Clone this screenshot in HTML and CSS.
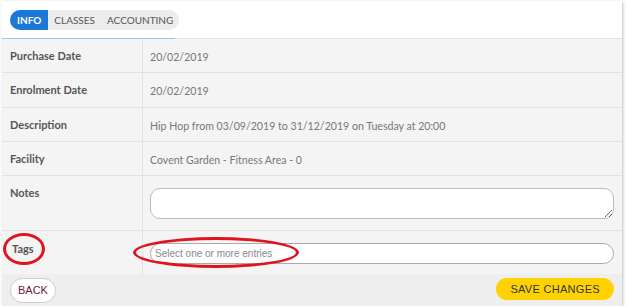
FILE: index.html
```html
<!DOCTYPE html>
<html lang="en">
<head>
  <meta charset="UTF-8" />
  <title>Enrolment</title>
  <link rel="stylesheet" href="styles.css">
</head>
<body>
  <div class="panel">
    <div class="tab-head">
      <div class="tabs">
        <span class="tab active">INFO</span>
        <span class="tab">CLASSES</span>
        <span class="tab">ACCOUNTING</span>
      </div>
    </div>

    <div class="rows">
      <div class="row"><div class="label">Purchase Date</div><div class="value">20/02/2019</div></div>
      <div class="row tall"><div class="label">Enrolment Date</div><div class="value">20/02/2019</div></div>
      <div class="row"><div class="label">Description</div><div class="value">Hip Hop from 03/09/2019 to 31/12/2019 on Tuesday at 20:00</div></div>
      <div class="row"><div class="label">Facility</div><div class="value">Covent Garden - Fitness Area - 0</div></div>
      <div class="row notes"><div class="label">Notes</div><div class="value"><textarea></textarea></div></div>
      <div class="row tags">
        <div class="label"><span class="mark-label">Tags</span></div>
        <div class="value"><div class="tag-input"><span class="mark-input"></span>Select one or more entries</div></div>
      </div>
    </div>

    <div class="footer">
      <button class="btn-back">BACK</button>
      <button class="btn-save">SAVE CHANGES</button>
    </div>
  </div>
</body>
</html>
```

FILE: styles.css
```css
body { margin: 0; background: #ffffff; font-family: 'Lato', 'Liberation Sans', sans-serif; font-size: 11px; color: #555; }
.panel { margin: 1px 0 0 2px; width: 620px; height: 305px; background: #f4f4f4; box-shadow: 1px 1px 3px rgba(0, 0, 0, 0.25); display: flex; flex-direction: column; }
.tab-head { height: 37px; flex-shrink: 0; background: #fff; border-bottom: 1px solid #e4e4e4; position: relative; }
.tab-head::after { content: ""; position: absolute; left: 0; bottom: -1px; width: 173px; height: 1px; background: #9cc8ef; }
.tabs { display: inline-flex; margin: 9px 0 0 8px; height: 20px; background: #ececec; border-radius: 10px; }
.tab { display: flex; align-items: center; padding: 0 6px; font-size: 10px; color: #555; }
.tab:last-child { padding-right: 6px; }
.tab.active { background: #1b78d8; color: #fff; font-weight: bold; border-radius: 10px 0 0 10px; padding: 0 7px; }
.row { display: grid; grid-template-columns: 141px 1fr; height: 34px; box-sizing: border-box; border-bottom: 1px solid #e2e2e2; }
.row.tall { height: 35px; }
.row .label { padding: 10px 0 0 8px; font-weight: bold; color: #555; border-right: 1px solid #e2e2e2; }
.row .value { padding: 12px 0 0 7px; color: #777; font-size: 10.6px; }
.row.notes { height: 55px; }
.row.notes .value { padding: 12px 8px 0 7px; }
textarea { display: block; width: 100%; height: 31px; box-sizing: border-box; border: 1px solid #bbb; border-radius: 10px; resize: vertical; background: #fff; }
.row.tags { height: 43px; border-bottom: none; }
.row.tags .label { padding: 2px 0 0 1px; }
.row.tags .value { padding: 12px 8px 0 7px; }
.mark-label { display: inline-block; padding: 6px 8px 7px 6px; border: 3px solid #e0141e; border-radius: 50%; font-weight: bold; }
.tag-input { position: relative; height: 21px; box-sizing: border-box; border: 1px solid #aaa; border-radius: 11px; background: #fff; padding: 4px 0 0 4px; font-family: 'Liberation Sans', sans-serif; font-size: 10px; color: #888; }
.mark-input { position: absolute; left: -18px; top: -7px; width: 160px; height: 25px; border: 3px solid #e0141e; border-radius: 50%; pointer-events: none; }
.footer { flex: 1; display: flex; justify-content: space-between; align-items: center; padding: 0 8px; background: #eeeeee; }
button { border-radius: 13px; font-family: 'Liberation Sans', sans-serif; font-size: 11px; cursor: pointer; }
.btn-back { height: 25px; padding: 0 7px; background: #fff; border: 1px solid #ccc; color: #6a1b3a; }
.btn-save { height: 22px; padding: 0 14px; background: #ffd200; border: none; color: #333; letter-spacing: 0.3px; margin-top: -3px; }
```
